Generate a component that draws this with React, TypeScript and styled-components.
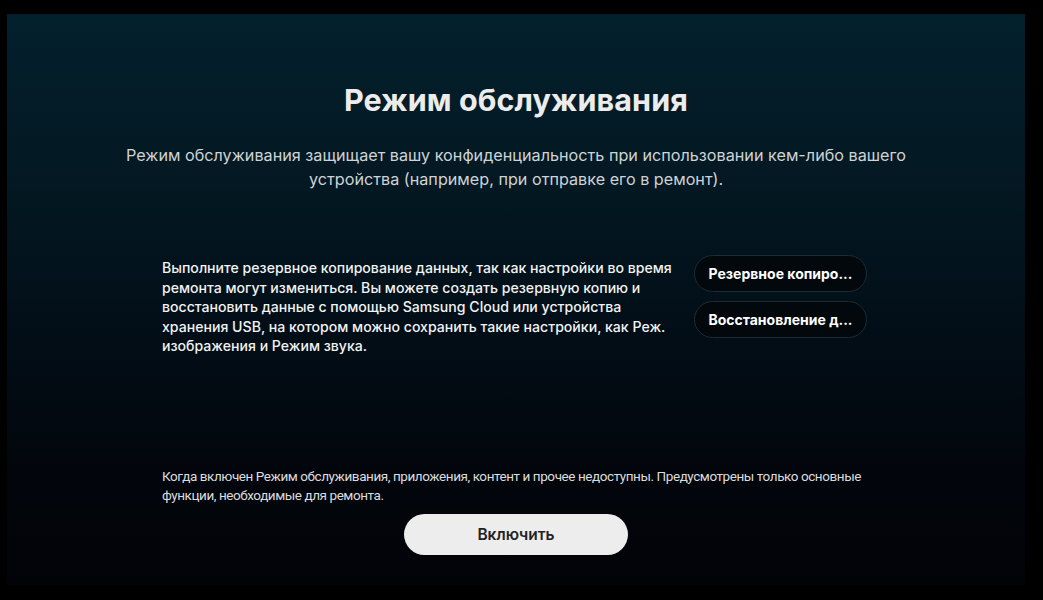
import React from "react"
import styled, { createGlobalStyle } from "styled-components"

const GlobalStyle = createGlobalStyle`
  html, body {
    margin: 0;
    padding: 0;
    background: #000;
  }
  body {
    font-family: Inter, "Noto Sans", "DejaVu Sans", sans-serif;
    color: #fff;
  }
`

const Frame = styled.div`
  width: 1043px;
  height: 600px;
  box-sizing: border-box;
  padding: 14px 18px 15px 7px;
  background: #000;
`

const Screen = styled.main`
  height: 100%;
  display: flex;
  flex-direction: column;
  align-items: center;
  background: linear-gradient(
    180deg,
    #03202d 0%,
    #031822 30%,
    #020e17 55%,
    #02060c 80%,
    #020307 100%
  );
`

const Title = styled.h1`
  margin: 66px 0 0;
  font-size: 30.5px;
  line-height: 40px;
  font-weight: 700;
  color: #ececec;
  letter-spacing: 0.1px;
`

const Lead = styled.p`
  margin: 23px 0 0;
  width: 820px;
  text-align: center;
  font-size: 16.2px;
  line-height: 24px;
  font-weight: 400;
  color: #cfd3d6;
`

const Content = styled.section`
  width: 708px;
  display: flex;
  flex-direction: column;
  flex: 1;
`

const BackupRow = styled.div`
  margin-top: 64px;
  display: flex;
  align-items: flex-start;
  padding-right: 3px;
`

const BackupText = styled.p`
  margin: 3px 0 0;
  width: 520px;
  font-size: 14.1px;
  line-height: 19.5px;
  font-weight: 500;
  color: #f2f2f2;
`

const ActionList = styled.div`
  margin-left: auto;
  display: flex;
  flex-direction: column;
  gap: 9px;
`

const PillButton = styled.button`
  width: 173px;
  height: 37px;
  box-sizing: border-box;
  border-radius: 19px;
  border: 1px solid #1e2b33;
  background: #03080c;
  color: #fff;
  font-family: inherit;
  font-size: 14px;
  font-weight: 700;
  text-align: center;
  padding: 0;
  white-space: nowrap;
`

const Notice = styled.p`
  margin: auto 0 0;
  font-family: Roboto, "Liberation Sans", sans-serif;
  font-size: 13.5px;
  letter-spacing: -0.43px;
  line-height: 19px;
  color: #dcdcdc;
`

const Footer = styled.div`
  display: flex;
  justify-content: center;
  padding: 9px 0 30px;
`

const EnableButton = styled.button`
  width: 224px;
  height: 41px;
  border-radius: 21px;
  border: none;
  background: #ededed;
  color: #222;
  font-family: inherit;
  font-size: 15.5px;
  font-weight: 600;
`

const App: React.FC = () => {
  return (
    <>
      <GlobalStyle />
      <Frame>
        <Screen>
          <Title>Режим обслуживания</Title>
          <Lead>
            Режим обслуживания защищает вашу конфиденциальность при использовании
            кем-либо вашего устройства (например, при отправке его в ремонт).
          </Lead>
          <Content>
            <BackupRow>
              <BackupText>
                Выполните резервное копирование данных, так как настройки во время
                ремонта могут измениться. Вы можете создать резервную копию и
                восстановить данные с помощью Samsung Cloud или устройства хранения
                USB, на котором можно сохранить такие настройки, как Реж.
                изображения и Режим звука.
              </BackupText>
              <ActionList>
                <PillButton>Резервное копиро...</PillButton>
                <PillButton>Восстановление д...</PillButton>
              </ActionList>
            </BackupRow>
            <Notice>
              Когда включен Режим обслуживания, приложения, контент и прочее
              недоступны. Предусмотрены только основные функции, необходимые для
              ремонта.
            </Notice>
          </Content>
          <Footer>
            <EnableButton>Включить</EnableButton>
          </Footer>
        </Screen>
      </Frame>
    </>
  )
}

export default App
